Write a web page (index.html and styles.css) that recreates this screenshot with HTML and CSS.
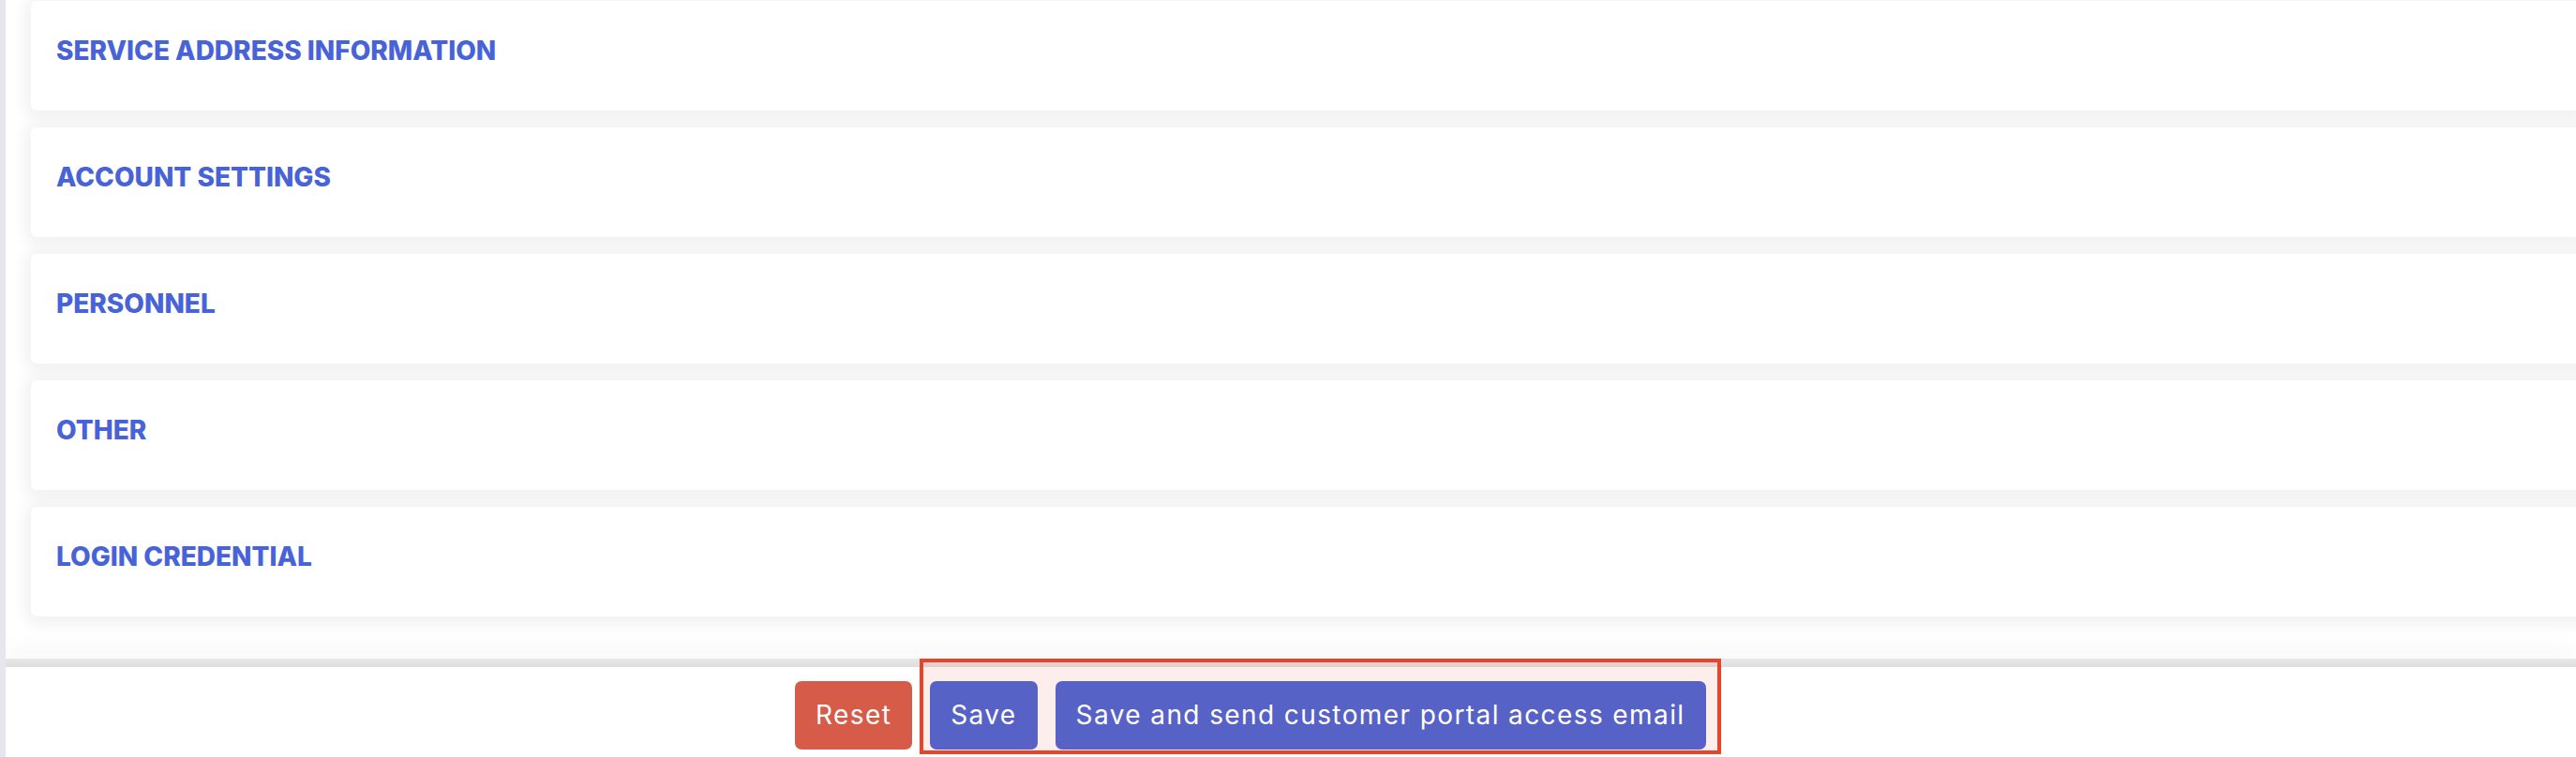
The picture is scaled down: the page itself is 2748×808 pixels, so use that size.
FILE: index.html
```html
<!DOCTYPE html>
<html lang="en">
<head>
<meta charset="utf-8">
<title>Customer form</title>
<link rel="stylesheet" href="styles.css">
</head>
<body>
<div class="app">
  <aside class="rail"></aside>
  <main class="content">
    <section class="panels">
      <div class="panel"><h2 class="panel-title">SERVICE ADDRESS INFORMATION</h2></div>
      <div class="panel"><h2 class="panel-title">ACCOUNT SETTINGS</h2></div>
      <div class="panel"><h2 class="panel-title">PERSONNEL</h2></div>
      <div class="panel"><h2 class="panel-title">OTHER</h2></div>
      <div class="panel"><h2 class="panel-title">LOGIN CREDENTIAL</h2></div>
    </section>
    <footer class="actions">
      <div class="highlight"></div>
      <button class="btn btn-reset" type="button">Reset</button>
      <button class="btn btn-primary" type="button">Save</button>
      <button class="btn btn-primary" type="button">Save and send customer portal access email</button>
    </footer>
  </main>
</div>
</body>
</html>
```

FILE: styles.css
```css
html, body {
  margin: 0;
  padding: 0;
  height: 100%;
}

body {
  background: #ffffff;
  overflow: hidden;
  font-family: Inter, "Liberation Sans", sans-serif;
}

.app {
  display: flex;
  height: 808px;
}

.rail {
  flex: none;
  width: 6px;
  background: #e7e6ed;
}

.content {
  flex: 1;
  min-width: 0;
  display: flex;
  flex-direction: column;
  overflow: hidden;
}

.panels {
  display: flex;
  flex-direction: column;
  gap: 18px;
  padding: 1px 0 0 27px;
  margin-right: -14px;
}

.panel {
  box-sizing: border-box;
  height: 117px;
  display: flex;
  align-items: center;
  padding: 0 0 12px 27px;
  background: #ffffff;
  border-radius: 6px;
  box-shadow: 0 2px 16px 6px rgba(0, 0, 0, 0.06);
}

.panel-title {
  margin: 0;
  font-family: Inter, "Liberation Sans", sans-serif;
  font-size: 28px;
  font-weight: 800;
  line-height: 34px;
  letter-spacing: 0;
  color: #4862d8;
}

.actions {
  position: relative;
  flex: 1;
  margin-top: 45px;
  display: flex;
  align-items: flex-start;
  gap: 19px;
  padding: 24px 0 0 842px;
  background: linear-gradient(to bottom, #e8e8e8 0, #dedede 9px, #ffffff 9px);
  box-shadow: 0 -14px 22px rgba(0, 0, 0, 0.025);
}

.highlight {
  position: absolute;
  left: 975px;
  top: 0;
  width: 855px;
  height: 102px;
  box-sizing: border-box;
  border: 4px solid #e8432b;
  background: rgba(232, 67, 43, 0.09);
  pointer-events: none;
  z-index: 0;
}

.btn {
  position: relative;
  z-index: 1;
  border: 0;
  border-radius: 7px;
  padding: 15px 22px;
  font-family: Inter, "Liberation Sans", sans-serif;
  font-size: 28px;
  font-weight: 400;
  line-height: 43px;
  letter-spacing: 1.4px;
  color: #ffffff;
  cursor: pointer;
  white-space: nowrap;
}

.btn-reset {
  background: #d65b49;
}

.btn-primary {
  background: #5762c7;
}
```
